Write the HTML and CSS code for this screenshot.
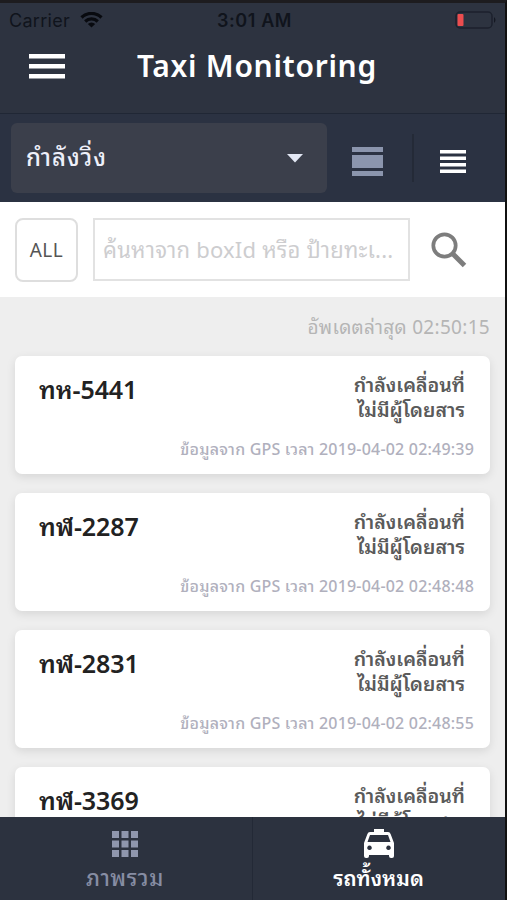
FILE: index.html
```
<!DOCTYPE html>
<html lang="th">
<head>
    <meta charset="UTF-8">
    <meta name="viewport" content="width=device-width, initial-scale=1.0">
    <title>Taxi Monitoring</title>
    <link rel="stylesheet" href="styles.css">
</head>
<body>
    <div class="app">
        <header class="header">
            <div class="status-bar">
                <div class="carrier">
                    <span>Carrier</span>
                    <svg width="23" height="16" viewBox="0 0 23 16" fill="none" stroke="#080a0f" stroke-width="3.2">
                        <path d="M1.5 5.5a14.2 14.2 0 0 1 20 0M5.2 9.5a9 9 0 0 1 12.6 0"/>
                        <path d="M11.5 15.5L7.8 12a5.3 5.3 0 0 1 7.4 0z" fill="#080a0f" stroke="none"/>
                    </svg>
                </div>
                <span class="clock">3:01 AM</span>
                <svg class="battery" width="42" height="18" viewBox="0 0 42 18">
                    <rect x="1" y="1" width="36" height="16" rx="4" fill="none" stroke="#1c212d" stroke-width="1.5"/>
                    <rect x="2.5" y="3" width="6" height="12" rx="1" fill="#ec4d4f"/>
                    <path d="M39 6q3 3 0 6z" fill="#141822"/>
                </svg>
            </div>
            <div class="title-bar">
                <svg class="menu-icon" width="36" height="25" viewBox="0 0 36 25" fill="#fff">
                    <path d="M0 0h36v4.5H0zM0 10h36v4.5H0zM0 20h36v4.5H0z"/>
                </svg>
                <h1>Taxi Monitoring</h1>
            </div>
        </header>

        <div class="toolbar">
            <button class="select">
                <span>กำลังวิ่ง</span>
                <svg width="16" height="9" viewBox="0 0 16 9" fill="#e3e8f5"><path d="M0 0h16L8 8.5z"/></svg>
            </button>
            <button class="view-button">
                <svg width="31" height="29" viewBox="0 0 31 29" fill="#8b95ad">
                    <path d="M0 0h31v5H0zM0 8h31v13H0zM0 24h31v5H0z"/>
                </svg>
            </button>
            <button class="view-button active">
                <svg width="26" height="23" viewBox="0 0 26 23" fill="#fff">
                    <path d="M0 0h26v3.5H0zM0 6.5h26V10H0zM0 13h26v3.5H0zM0 19.5h26V23H0z"/>
                </svg>
            </button>
        </div>

        <div class="search-bar">
            <button class="all-button">ALL</button>
            <div class="search-input">ค้นหาจาก boxId หรือ ป้ายทะเ...</div>
            <svg width="36" height="36" viewBox="0 0 36 36" fill="none" stroke="#7d7d7d">
                <circle cx="13.5" cy="13.5" r="11.2" stroke-width="3.7"/>
                <path d="M22 22l11.5 11.5" stroke-width="5"/>
            </svg>
        </div>

        <main class="content">
            <p class="updated">อัพเดตล่าสุด 02:50:15</p>

            <article class="card">
                <h2>ทห-5441</h2>
                <p class="state"><span>กำลังเคลื่อนที่</span><span>ไม่มีผู้โดยสาร</span></p>
                <p class="gps">ข้อมูลจาก GPS เวลา 2019-04-02 02:49:39</p>
            </article>
            <article class="card">
                <h2>ทฬ-2287</h2>
                <p class="state"><span>กำลังเคลื่อนที่</span><span>ไม่มีผู้โดยสาร</span></p>
                <p class="gps">ข้อมูลจาก GPS เวลา 2019-04-02 02:48:48</p>
            </article>
            <article class="card">
                <h2>ทฬ-2831</h2>
                <p class="state"><span>กำลังเคลื่อนที่</span><span>ไม่มีผู้โดยสาร</span></p>
                <p class="gps">ข้อมูลจาก GPS เวลา 2019-04-02 02:48:55</p>
            </article>
            <article class="card">
                <h2>ทฬ-3369</h2>
                <p class="state"><span>กำลังเคลื่อนที่</span><span>ไม่มีผู้โดยสาร</span></p>
            </article>
        </main>

        <nav class="tabs">
            <a class="tab">
                <svg width="26" height="26" viewBox="0 0 26 26" fill="#8f96ad">
                    <path d="M0 0h7v7H0zM9.5 0h7v7h-7zM19 0h7v7h-7zM0 9.500h7v7H0zM9.500 9.500h7v7h-7zM19 9.500h7v7h-7zM0 19h7v7H0zM9.500 19h7v7h-7zM19 19h7v7h-7z"/>
                </svg>
                <span>ภาพรวม</span>
            </a>
            <a class="tab active">
                <svg width="30" height="29" viewBox="0 0 30 29" fill="#fff" fill-rule="evenodd">
                    <path d="M10 0h10v3h4q2 0 2.600 2L30 14v13q0 2-2 2h-1q-2 0-2-2v-1H5v1q0 2-2 2H2q-2 0-2-2V14l3.400-9Q4 3 6 3h4zM6 6L3.500 13h23L24 6zM5.500 16.500a2.300 2.300 0 1 0 .01 0zM24.500 16.500a2.300 2.300 0 1 0 .01 0z"/>
                </svg>
                <span>รถทั้งหมด</span>
            </a>
        </nav>
    </div>
</body>
</html>
```
FILE: styles.css
```
* {
    margin: 0;
    padding: 0;
    box-sizing: border-box;
}

body {
    font-family: "Noto Sans", "Noto Sans Thai Looped", "Sarabun", "Loma", "Garuda", "Waree", sans-serif;
    background-color: #111;
}

button {
    border: none;
    background: none;
    font-family: inherit;
}

svg {
    display: block;
    flex-shrink: 0;
}

.app {
    display: flex;
    flex-direction: column;
    width: 507px;
    height: 900px;
    border-top: 3px solid #1d1c1f;
    border-right: 2px solid #111;
    background-color: #eee;
    overflow: hidden;
}

/* Header */
.header {
    height: 111px;
    flex-shrink: 0;
    background-color: #2d3340;
    border-bottom: 1px solid #202735;
}

.status-bar {
    display: grid;
    grid-template-columns: 1fr auto 1fr;
    align-items: center;
    height: 34px;
    padding: 0 8px 0 9px;
    font-family: Inter, sans-serif;
    font-size: 18px;
    color: #10141c;
}

.carrier {
    display: flex;
    align-items: center;
    gap: 10px;
    letter-spacing: 0.3px;
}

.clock {
    margin-left: 3px;
    font-weight: 600;
    letter-spacing: 0.6px;
}

.battery {
    justify-self: end;
}

.title-bar {
    display: flex;
    align-items: center;
    height: 58px;
    padding-left: 29px;
}

.title-bar h1 {
    margin-left: 72px;
    font-size: 30px;
    font-weight: 600;
    letter-spacing: 0.7px;
    line-height: 40px;
    white-space: nowrap;
    color: #fff;
}

/* Filter and view switch */
.toolbar {
    display: flex;
    align-items: center;
    height: 88px;
    flex-shrink: 0;
    padding-left: 11px;
    background-color: #2b3242;
}

.select {
    display: flex;
    align-items: center;
    justify-content: space-between;
    width: 316px;
    height: 70px;
    padding: 0 24px 0 15px;
    border-radius: 6px;
    background-color: #3b3f4b;
    font-size: 24px;
    font-weight: 500;
    letter-spacing: 1px;
    color: #eef0fa;
}

.select span {
    padding-bottom: 6px;
}

.view-button {
    display: flex;
    align-items: center;
    justify-content: center;
    width: 85px;
    height: 48px;
    padding: 6px 4px 0 0;
}

.view-button.active {
    border-left: 2px solid #242a37;
    padding-right: 6px;
}

/* Search */
.search-bar {
    display: flex;
    align-items: center;
    height: 95px;
    flex-shrink: 0;
    padding-left: 15px;
    background-color: #fff;
}

.all-button {
    width: 63px;
    height: 64px;
    border: 2px solid #dedede;
    border-radius: 8px;
    font-size: 19px;
    letter-spacing: 0.5px;
    color: #555;
}

.search-input {
    width: 317px;
    height: 63px;
    margin: 0 21px 0 15px;
    padding-left: 8px;
    border: 2px solid #e2e2e2;
    font-size: 22px;
    letter-spacing: 0.2px;
    line-height: 58px;
    white-space: nowrap;
    color: #cdcdcf;
}

/* Vehicle list */
.content {
    flex: 1;
    min-height: 0;
    padding: 15px 15px 0;
    overflow: hidden;
}

.updated {
    height: 44px;
    font-size: 19px;
    letter-spacing: 0.3px;
    line-height: 30px;
    text-align: right;
    white-space: nowrap;
    color: #b5b5b5;
}

.card {
    display: grid;
    grid-template-columns: 1fr auto;
    grid-template-rows: 68px 1fr;
    height: 118px;
    margin-bottom: 19px;
    padding: 15px 16px 9px 24px;
    border-radius: 7px;
    background-color: #fff;
    box-shadow: 0 3px 10px rgba(0, 0, 0, 0.1);
}

.card h2 {
    font-size: 25px;
    font-weight: 600;
    letter-spacing: -0.1px;
    line-height: 37px;
    color: #222;
}

.state {
    padding: 1px 9px 0 0;
    font-size: 19.5px;
    font-weight: 600;
    line-height: 25px;
    text-align: right;
    color: #5a5a5a;
}

.state span {
    display: block;
}

.gps {
    grid-column: 1 / -1;
    font-size: 16px;
    font-weight: 500;
    letter-spacing: 0.2px;
    line-height: 20px;
    text-align: right;
    white-space: nowrap;
    color: #b0b0bd;
}

/* Bottom navigation */
.tabs {
    display: flex;
    height: 83px;
    flex-shrink: 0;
    background-color: #2c323f;
}

.tab {
    display: flex;
    flex-direction: column;
    align-items: center;
    width: 252px;
    padding: 14px 2px 0 0;
    font-size: 22px;
    font-weight: 500;
    letter-spacing: 0.6px;
    line-height: 32px;
    color: #878da3;
}

.tab span {
    margin-top: 4px;
}

.tab.active {
    padding: 12px 0 0;
    border-left: 1px solid #232936;
    font-size: 21px;
    letter-spacing: 0;
    color: #fff;
    font-weight: 600;
}

.tab.active span {
    margin-top: 4px;
}
```
